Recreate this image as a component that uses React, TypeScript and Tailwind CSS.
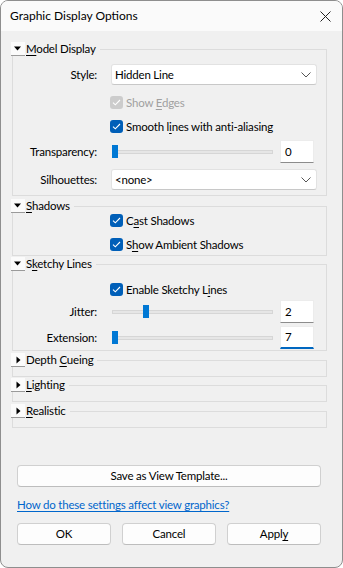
import React from "react";

const FONT = { fontFamily: 'Lato, "Noto Sans", sans-serif' };
const T = "text-[11.5px] tracking-[-0.2px]";

function U({ text, i }: { text: string; i: number }) {
  return (
    <>
      {text.slice(0, i)}
      <span className="underline underline-offset-2">{text[i]}</span>
      {text.slice(i + 1)}
    </>
  );
}

function Tri({ open }: { open: boolean }) {
  return (
    <div className="w-[14px] h-[14px] bg-[#fbfbfb] border-b border-[#9a9a9a] flex items-center justify-center shrink-0">
      {open ? (
        <svg width="8" height="5" viewBox="0 0 8 5">
          <path d="M0 0.5 L7 0.5 L3.5 4.5 Z" fill="#000" />
        </svg>
      ) : (
        <svg width="5" height="8" viewBox="0 0 5 8">
          <path d="M0.5 0.5 L4.5 4 L0.5 7.5 Z" fill="#000" />
        </svg>
      )}
    </div>
  );
}

function Group({
  title,
  open,
  className,
  boxClass,
  children,
}: {
  title: React.ReactNode;
  open: boolean;
  className?: string;
  boxClass?: string;
  children?: React.ReactNode;
}) {
  return (
    <div className={className}>
      <div className="relative z-10 h-[14px] flex items-center">
        <Tri open={open} />
        <div className={"bg-[#f0f0f0] pl-[1px] pr-[4px] leading-[14px] text-black " + T}>{title}</div>
      </div>
      <div className={"-mt-[7px] ml-[1px] border border-[#dcdcdc] " + (boxClass || "")}>{children}</div>
    </div>
  );
}

function Check({ disabled }: { disabled?: boolean }) {
  return (
    <div
      className={
        "w-[13px] h-[13px] rounded-[3px] flex items-center justify-center shrink-0 " +
        (disabled ? "bg-[#cccccc]" : "bg-[#005fb8]")
      }
    >
      <svg width="9" height="7" viewBox="0 0 9 7">
        <path d="M1 3.6 L3.3 5.8 L8 1" stroke="#fff" strokeWidth="1.1" fill="none" />
      </svg>
    </div>
  );
}

function CheckRow({ label, disabled, className }: { label: React.ReactNode; disabled?: boolean; className?: string }) {
  return (
    <div className={"flex items-center h-[13px] pl-[97px] " + (className || "")}>
      <Check disabled={disabled} />
      <span className={"ml-[3px] leading-[13px] " + T + " " + (disabled ? "text-[#a0a0a0]" : "text-black")}>{label}</span>
    </div>
  );
}

function Chevron() {
  return (
    <svg width="10" height="6" viewBox="0 0 10 6">
      <path d="M0.5 0.5 L5 5 L9.5 0.5" stroke="#555" strokeWidth="1" fill="none" />
    </svg>
  );
}

function Select({ value }: { value: string }) {
  return (
    <div className="w-[206px] h-[21px] bg-white border border-[#e2e2e2] border-b-[#c8c8c8] rounded-[3px] flex items-center pl-[3px] pr-[5px] justify-between">
      <span className={"text-black leading-[14px] " + T}>{value}</span>
      <Chevron />
    </div>
  );
}

function Label({ children }: { children: React.ReactNode }) {
  return <div className={"w-[84px] text-right text-black leading-[14px] shrink-0 " + T}>{children}</div>;
}

function Slider({ pos, value, focused }: { pos: number; value: string; focused?: boolean }) {
  return (
    <div className="flex items-center ml-[14px]">
      <div className="relative w-[162px] h-[13px] flex items-center">
        <div className="w-full h-[4px] bg-[#e6e6e6] border border-[#d6d6d6] ml-[1px]" />
        <div className="absolute top-0 w-[6px] h-[13px] bg-[#0078d4]" style={{ left: pos }} />
      </div>
      <div
        className={
          "ml-[7px] w-[34px] h-[23px] bg-white border border-[#ececec] flex items-center pl-[4px] text-black " +
          T +
          " " +
          (focused ? "border-b-2 border-b-[#0067c0]" : "border-b-[#8c8c8c]")
        }
      >
        {value}
      </div>
    </div>
  );
}

function Btn({ children, className }: { children: React.ReactNode; className?: string }) {
  return (
    <div
      className={
        "h-[22px] bg-[#fdfdfd] border border-[#d0d0d0] border-b-[#bdbdbd] rounded-[4px] flex items-center justify-center text-black " +
        T +
        " " +
        (className || "")
      }
    >
      {children}
    </div>
  );
}

export default function App() {
  return (
    <div className="w-[343px] h-[568px] bg-[#f0f0f0] border border-[#8e8e8e] rounded-[8px] overflow-hidden flex flex-col" style={FONT}>
      <div className="h-[30px] bg-[#fafafa] flex items-center justify-between pl-[9px] pr-[11px] shrink-0">
        <span className="text-[12px] text-black">Graphic Display Options</span>
        <svg width="11" height="11" viewBox="0 0 11 11">
          <path d="M0.5 0.5 L10.5 10.5 M10.5 0.5 L0.5 10.5" stroke="#222" strokeWidth="1" />
        </svg>
      </div>
      <div className="pl-[10px] pr-[15px] flex flex-col">
        <Group title={<U text="Model Display" i={0} />} open className="mt-[11px]" boxClass="pt-[14px] pb-[5px]">
          <div className="flex items-center h-[21px]">
            <Label>Style:</Label>
            <div className="ml-[14px]">
              <Select value="Hidden Line" />
            </div>
          </div>
          <CheckRow label={<U text="Show Edges" i={5} />} disabled className="mt-[11px]" />
          <CheckRow label={<U text="Smooth lines with anti-aliasing" i={8} />} className="mt-[11px]" />
          <div className="flex items-center h-[23px] mt-[7px]">
            <Label>Transparency:</Label>
            <Slider pos={1} value="0" />
          </div>
          <div className="flex items-center h-[21px] mt-[6px]">
            <Label>Silhouettes:</Label>
            <div className="ml-[14px]">
              <Select value="<none>" />
            </div>
          </div>
        </Group>
        <Group title={<U text="Shadows" i={0} />} open className="mt-[3px]" boxClass="pt-[7px] pb-[4px]">
          <CheckRow label={<U text="Cast Shadows" i={1} />} />
          <CheckRow label={<U text="Show Ambient Shadows" i={1} />} className="mt-[11px]" />
        </Group>
        <Group title={<U text="Sketchy Lines" i={1} />} open className="mt-[1px]" boxClass="pt-[18px] pb-[1px]">
          <CheckRow label={<U text="Enable Sketchy Lines" i={16} />} />
          <div className="flex items-center h-[23px] mt-[4px]">
            <Label>Jitter:</Label>
            <Slider pos={32} value="2" />
          </div>
          <div className="flex items-center h-[23px] mt-[3px]">
            <Label>Extension:</Label>
            <Slider pos={1} value="7" focused />
          </div>
        </Group>
        <Group title={<U text="Depth Cueing" i={6} />} open={false} className="mt-[2px]" boxClass="h-[17px]" />
        <Group title={<U text="Lighting" i={0} />} open={false} className="mt-[1px]" boxClass="h-[17px]" />
        <Group title={<U text="Realistic" i={0} />} open={false} className="mt-[2px]" boxClass="h-[17px]" />
      </div>
      <div className="pl-[16px] pr-[21px] flex flex-col">
        <Btn className="mt-[37px]">Save as View Template...</Btn>
        <div className="mt-[10px] h-[16px] flex items-center">
          <span className={"text-[#0066cc] underline underline-offset-2 " + T}>How do these settings affect view graphics?</span>
        </div>
        <div className="mt-[10px] flex gap-[11px]">
          <Btn className="w-[94px]">OK</Btn>
          <Btn className="w-[94px]">Cancel</Btn>
          <Btn className="w-[94px]">
            <U text="Apply" i={4} />
          </Btn>
        </div>
      </div>
    </div>
  );
}
